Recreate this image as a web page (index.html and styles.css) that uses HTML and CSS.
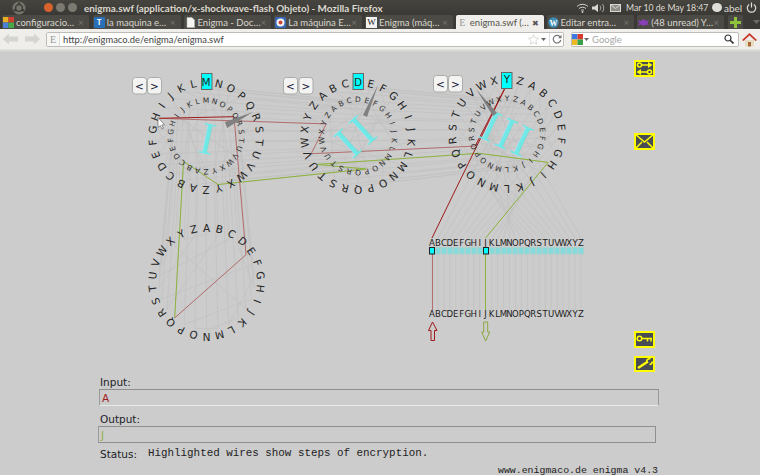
FILE: index.html
```html
<!DOCTYPE html>
<html lang="en">
<head>
<meta charset="utf-8">
<title>enigma.swf</title>
<link rel="stylesheet" href="styles.css">
</head>
<body>
<header class="chrome">
  <div class="titlebar">
    <svg class="ubuntu" width="16" height="14" viewBox="0 0 16 14"><circle cx="8" cy="7" r="6.5" fill="#77746c"/><circle cx="8" cy="7" r="3.4" fill="none" stroke="#3c3b37" stroke-width="1.4"/><circle cx="8" cy="2.6" r="1.3" fill="#3c3b37"/><circle cx="4" cy="9.2" r="1.3" fill="#3c3b37"/><circle cx="12" cy="9.2" r="1.3" fill="#3c3b37"/></svg>
    <span class="winbtn winbtn-close"></span>
    <span class="winbtn"></span>
    <span class="winbtn"></span>
    <span class="title">enigma.swf (application/x-shockwave-flash Objeto) - Mozilla Firefox</span>
    <div class="tray">
      <svg width="13" height="10" viewBox="0 0 13 10"><path d="M1 3.5C4 .6 9 .6 12 3.5M3 5.5C5 3.8 8 3.8 10 5.5M5 7.4C5.8 6.8 7.2 6.8 8 7.4" fill="none" stroke="#d8d6cf" stroke-width="1"/><circle cx="6.5" cy="9" r=".9" fill="#d8d6cf"/></svg>
      <svg class="tray-sound" width="13" height="10" viewBox="0 0 13 10"><path d="M0 3.5h2.5L6 1v8L2.5 6.5H0z" fill="#d8d6cf"/><path d="M8 2.5c1 1.5 1 3.5 0 5M10.5 1c1.6 2.5 1.6 5.5 0 8" fill="none" stroke="#a8a69f"/></svg>
      <svg class="tray-mail" width="11" height="8" viewBox="0 0 11 8"><rect x=".5" y=".5" width="10" height="7" fill="#8f8d86" stroke="#d8d6cf"/><path d="M.5.5l5 4 5-4" fill="none" stroke="#d8d6cf"/></svg>
      <span class="clock">Mar 10 de May 18:47</span>
      <span class="userdot"></span>
      <span class="user">abel</span>
      <svg class="tray-power" width="11" height="11" viewBox="0 0 11 11"><path d="M3.2 2.5a4.2 4.2 0 1 0 4.6 0" fill="none" stroke="#e4e2db" stroke-width="1.2"/><path d="M5.5 .5v5" stroke="#e4e2db" stroke-width="1.2"/></svg>
    </div>
  </div>
  <nav class="tabbar">
    <div class="tab tab-first"><svg class="fav" width="11" height="11" viewBox="0 0 11 11"><rect width="5.5" height="5.5" fill="#e8b020"/><rect x="5.5" width="5.5" height="5.5" fill="#d04030"/><rect y="5.5" width="5.5" height="5.5" fill="#4a80d8"/><rect x="5.5" y="5.5" width="5.5" height="5.5" fill="#48a848"/></svg><span class="tablabel">configuracio…</span><span class="tabx">×</span></div>
    <div class="tab"><span class="fav fav-t">T</span><span class="tablabel">la maquina e…</span><span class="tabx">×</span></div>
    <div class="tab"><svg class="fav" width="11" height="11" viewBox="0 0 11 11"><path d="M2 .5h5l2.5 2.5v7.5H2z" fill="#f4f4f2" stroke="#b8b8b4" stroke-width=".6"/></svg><span class="tablabel">Enigma - Doc…</span><span class="tabx">×</span></div>
    <div class="tab"><svg class="fav" width="11" height="11" viewBox="0 0 11 11"><rect width="11" height="11" rx="1.5" fill="#3a68b8"/><circle cx="5.5" cy="5.5" r="4" fill="#f4f4f4"/><circle cx="5.5" cy="5.5" r="2" fill="#c84838"/></svg><span class="tablabel">La máquina E…</span><span class="tabx">×</span></div>
    <div class="tab"><span class="fav fav-w">W</span><span class="tablabel">Enigma (máq…</span><span class="tabx">×</span></div>
    <div class="tab tab-active"><span class="fav fav-e">E</span><span class="tablabel">enigma.swf (…</span><span class="tabx tabx-active">✖</span></div>
    <div class="tab"><svg class="fav" width="11" height="11" viewBox="0 0 11 11"><circle cx="5.5" cy="5.5" r="5.2" fill="#3f8cb4"/><text class="fav-wp" x="5.5" y="8.5">W</text></svg><span class="tablabel">Editar entra…</span><span class="tabx">×</span></div>
    <div class="tab tab-narrow"><svg class="fav" width="11" height="11" viewBox="0 0 11 11"><path d="M0 3l3 1 2.5-2 2.5 2 3-1-1.5 3 1.5 2.5-3-1-2.5 1.5-2.5-1.5-3 1L1.5 6z" fill="#8a3fb8"/></svg><span class="tablabel">(48 unread) Y…</span><span class="tabx">×</span></div>
    <div class="newtab"><svg width="11" height="11" viewBox="0 0 11 11"><path d="M4 0h3v4h4v3H7v4H4V7H0V4h4z" fill="#8fc23c"/></svg></div>
    <svg class="tabmenu" width="7" height="4" viewBox="0 0 7 4"><path d="M0 0h7L3.5 4z" fill="#6c6a64"/></svg>
  </nav>
  <div class="toolbar">
    <svg class="navarrow" width="15" height="12" viewBox="0 0 15 12"><path d="M0 6l6-5.5V3.5h9v5H6v3z" fill="#d4d4d0"/></svg>
    <svg class="navarrow navarrow-fwd" width="15" height="12" viewBox="0 0 15 12"><path d="M15 6L9 .5V3.5H0v5h9v3z" fill="#d4d4d0"/></svg>
    <div class="urlbar">
      <span class="urlicon">E</span>
      <span class="urltext">http://enigmaco.de/enigma/enigma.swf</span>
      <svg class="star" width="11" height="11" viewBox="0 0 11 11"><path d="M5.5.6l1.5 3.3 3.5.4-2.6 2.4.7 3.5-3.1-1.8-3.1 1.8.7-3.5L.5 4.3 4 3.9z" fill="#fff" stroke="#d0d0cc" stroke-width=".8"/></svg>
      <svg class="drop" width="5" height="3" viewBox="0 0 5 3"><path d="M0 0h5L2.5 3z" fill="#666"/></svg>
      <span class="urlsep"></span>
      <svg class="reload" width="10" height="10" viewBox="0 0 10 10"><path d="M8.5 3.5A3.8 3.8 0 1 0 8.8 6" fill="none" stroke="#777" stroke-width="1.2"/><path d="M9.5.8v3.5H6z" fill="#777"/></svg>
    </div>
    <div class="searchbar">
      <svg width="11" height="11" viewBox="0 0 11 11"><rect width="5.5" height="5.5" fill="#3b78e0"/><rect x="5.5" width="5.5" height="5.5" fill="#d83a2e"/><rect y="5.5" width="5.5" height="5.5" fill="#f0b820"/><rect x="5.5" y="5.5" width="5.5" height="5.5" fill="#38a048"/></svg>
      <svg class="drop drop-search" width="5" height="3" viewBox="0 0 5 3"><path d="M0 0h5L2.5 3z" fill="#666"/></svg>
      <span class="searchtext">Google</span>
      <svg class="magnifier" width="10" height="10" viewBox="0 0 10 10"><circle cx="4" cy="4" r="3" fill="#fff" stroke="#333" stroke-width="1.2"/><path d="M6.2 6.2L9.5 9.5" stroke="#333" stroke-width="1.6"/></svg>
    </div>
    <svg class="home" width="15" height="15" viewBox="0 0 15 15"><path d="M3 8h9v6.5H3z" fill="#e8dcc0"/><path d="M6 10h3v4.5H6z" fill="#a86838"/><path d="M0 8l7.5-7L15 8l-1.5 1-6-5.5L1.5 9z" fill="#c83a28"/></svg>
  </div>
  <div class="toolbar-shade"></div>
</header>

<main class="flash">
  <svg id="machine" class="machine" width="760" height="324" viewBox="0 52 760 324">
    <g id="wires"></g>
    <g id="letters"></g>
    <g class="sideicon">
      <rect x="635" y="61" width="19" height="15"/>
      <circle class="ic-line" cx="639.5" cy="65" r="2"/><path class="ic-line" d="M642 65h7"/><path class="ic-fill" d="M648 62l4.5 3-4.5 3z"/>
      <circle class="ic-line" cx="649.5" cy="72" r="2"/><path class="ic-line" d="M640 72h7"/><path class="ic-fill" d="M641 69l-4.5 3 4.5 3z"/>
    </g>
    <g class="sideicon">
      <rect x="635" y="134" width="19" height="15"/>
      <path class="ic-line" d="M635 134l9.5 8 9.5-8M635 149l7-7M654 149l-7-7"/>
    </g>
    <g class="sideicon">
      <rect x="635" y="332" width="19" height="15"/>
      <circle class="ic-line" cx="639.5" cy="338.5" r="2.3"/><path class="ic-line" d="M642 338.5h10M647.5 338.5v3M651 338.5v3"/>
    </g>
    <g class="sideicon">
      <rect x="635" y="357" width="19" height="14"/>
      <path class="ic-wrench" d="M638 368l10-6.5"/><path class="ic-line" d="M646.5 361c.5-1.5 2-2.5 4-2.2M649.5 364.5c1.5 0 2.5-1 3-3"/>
    </g>
  </svg>

  <form class="console">
    <label class="fieldlabel">Input:</label>
    <div class="field field-input"><span class="value-in">A</span></div>
    <label class="fieldlabel fieldlabel-out">Output:</label>
    <div class="field field-output"><span class="value-out">J</span></div>
    <div class="statusrow"><span class="fieldlabel status-label">Status:</span><span class="status-text">Highlighted wires show steps of encryption.</span></div>
    <div class="credit">www.enigmaco.de enigma v4.3</div>
  </form>
</main>
<script src="script.js"></script>
</body>
</html>
```
FILE: styles.css
```css
* { box-sizing: border-box; }
html, body { margin: 0; padding: 0; }
body { width: 760px; height: 475px; overflow: hidden; background: #cccccc; font-family: "DejaVu Sans", sans-serif; }

.chrome { display: flex; flex-direction: column; font-family: Lato, sans-serif; }
.titlebar { height: 15px; background: linear-gradient(#45443f, #3a3935); display: flex; align-items: center; color: #dfdbd2; position: relative; }
.ubuntu { margin-left: 11px; }
.winbtn { width: 9px; height: 9px; border-radius: 50%; background: #7b7970; margin-left: 3px; }
.winbtn-close { background: #d8622e; margin-left: 17px; }
.winbtn + .winbtn { margin-left: 3px; }
.title { font-size: 9.9px; font-weight: 700; margin-left: 7px; white-space: nowrap; color: #dcd8cf; }
.tray { margin-left: auto; display: flex; align-items: center; font-size: 8.7px; color: #dfdbd2; padding-right: 3px; }
.tray-sound { margin-left: 3px; }
.tray-mail { margin-left: 5px; }
.clock { margin-left: 5px; width: 80px; white-space: nowrap; }
.userdot { width: 10px; height: 9px; border-radius: 50%; background: #e0ded8; margin-left: 6px; }
.user { margin-left: 2px; width: 18px; font-size: 10px; }
.tray-power { margin-left: 4px; }

.tabbar { height: 14px; background: #3b3a36; display: flex; align-items: stretch; padding-left: 2px; gap: 3px; }
.tab { width: 88px; background: #4b4a45; border-radius: 2px 2px 0 0; display: flex; align-items: center; color: #d9d6cd; font-size: 9.5px; padding: 0 5px 0 1px; white-space: nowrap; }
.tab-first { width: 87px; margin-right: 1px; }
.tab-narrow { width: 87px; }
.tab-active { background: #efeeea; color: #55544f; height: 15px; }
.tablabel { margin-left: 2px; flex: 1; }
.tabx { color: #77756e; font-size: 10px; line-height: 1; }
.tabx-active { color: #555; font-size: 8px; }
.fav { width: 11px; height: 11px; flex: none; display: block; }
.fav-t { background: #2a70b8; color: #fff; font-size: 8px; font-weight: 700; text-align: center; line-height: 11px; border-radius: 1px; }
.fav-w { background: #f2f2f2; color: #222; font-family: "Liberation Serif", serif; font-size: 9px; text-align: center; line-height: 11px; }
.fav-e { color: #999; font-family: "Liberation Serif", serif; font-size: 10px; text-align: center; line-height: 11px; }
.fav-wp { fill: #fff; font-family: "Liberation Serif", serif; font-size: 8px; font-weight: 700; text-anchor: middle; }
.newtab { width: 15px; margin-left: 1px; background: #4b4a45; display: flex; align-items: center; justify-content: center; border-radius: 2px 2px 0 0; }
.tabmenu { align-self: center; margin-left: 7px; }

.toolbar { height: 20px; background: #efeeeb; display: flex; align-items: center; padding-left: 3px; }
.navarrow { margin-right: 7px; }
.navarrow-fwd { margin-right: 6px; }
.urlbar { width: 518px; height: 15px; background: #fff; border: 1px solid #bdbcb6; border-radius: 2px; display: flex; align-items: center; }
.urlicon { width: 13px; height: 13px; border-right: 1px solid #ddd; background: #f6f6f4; color: #999; font-family: "Liberation Serif", serif; font-size: 10px; line-height: 13px; text-align: center; flex: none; }
.urltext { font-size: 9.4px; color: #444; margin-left: 3px; flex: 1; white-space: nowrap; }
.star { margin-right: 2px; }
.drop { margin-right: 3px; }
.urlsep { width: 1px; height: 13px; background: #dedede; margin-right: 2px; }
.reload { margin-right: 1px; }
.searchbar { width: 168px; height: 15px; margin-left: 7px; background: #fff; border: 1px solid #bdbcb6; border-radius: 2px; display: flex; align-items: center; padding: 0 3px 0 0; }
.drop-search { margin-left: 1px; }
.searchtext { font-size: 9.5px; color: #a8a8a8; flex: 1; }
.magnifier { margin-right: 1px; }
.home { margin-left: 3px; }
.toolbar-shade { height: 3px; background: linear-gradient(#e6e5e1, #cccccc); }

.flash { display: flex; flex-direction: column; }
.machine { display: block; flex: none; }

.letter { font-family: "DejaVu Sans", sans-serif; fill: #262626; text-anchor: middle; }
.letter-outer { font-size: 10.5px; }
.letter-inner { font-size: 7.5px; fill: #333; }
.row-letter { font-family: "DejaVu Sans Condensed", "DejaVu Sans", sans-serif; font-stretch: condensed; font-size: 9.5px; fill: #222; text-anchor: middle; }
.numeral { font-family: "Liberation Serif", serif; font-size: 46px; fill: #70e8e8; text-anchor: middle; }
.numeral-2 { letter-spacing: 5px; }
.numeral-3 { letter-spacing: 2px; }
.stepper { fill: #f3f4f2; stroke: #a9aca8; stroke-width: 1; }
.stepper-text { font-family: "DejaVu Sans", sans-serif; font-size: 10.5px; fill: #113; text-anchor: middle; }
.window { fill: #00ffff; stroke: #666; stroke-width: 1; }
.needle { fill: #808080; }
.wire { stroke: #c0c0c0; stroke-width: .6; fill: none; }
.hot-red { stroke: #b36d6d; stroke-width: 1; fill: none; }
.hot-red-strong { stroke: #a01c1c; stroke-width: 1; fill: none; }
.hot-green { stroke: #8db33c; stroke-width: 1; fill: none; }
.lamp { fill: #86dada; stroke: #a8d0d0; stroke-width: .6; }
.lamp-on { fill: #00ffff; stroke: #222; stroke-width: 1; }
.arrow-red { fill: none; stroke: #a01818; stroke-width: 1; }
.arrow-green { fill: none; stroke: #8aa83a; stroke-width: 1; }
.cursor { fill: #fff; stroke: #555; stroke-width: .6; }
.sideicon rect { fill: #474c55; stroke: #ffff00; stroke-width: 2; }
.ic-line { fill: none; stroke: #ffff00; stroke-width: 1.5; }
.ic-fill { fill: #ffff00; }
.ic-wrench { fill: none; stroke: #ffff00; stroke-width: 2.4; }

.console { display: flex; flex-direction: column; padding-left: 98px; font-family: "DejaVu Sans", sans-serif; }
.fieldlabel { font-size: 10.5px; line-height: 13px; color: #1c2228; padding-left: 2px; height: 13px; }
.fieldlabel-out { margin-top: 7px; }
.field { height: 17px; border-top: 1px solid #8f8f8f; border-left: 1px solid #9a9a9a; font-family: "DejaVu Sans", sans-serif; font-size: 10.5px; line-height: 17px; padding-left: 2px; }
.field-input { width: 560px; margin-left: 1px; border-right: 1px solid #9a9a9a; border-bottom: 1px solid #e6ebe6; }
.field-output { width: 558px; border-right: 1px solid #8f8f8f; border-bottom: 1px solid #8f8f8f; }
.value-in { color: #a01c1c; }
.value-out { color: #8db33c; }
.statusrow { display: flex; margin-top: 4px; height: 17px; }
.status-label { margin-top: 1px; width: 50px; }
.status-text { font-family: "Liberation Mono", monospace; font-size: 10.87px; line-height: 11px; margin-top: 1px; color: #222; white-space: nowrap; }
.credit { width: 560px; text-align: right; font-family: "Liberation Mono", monospace; font-size: 9.9px; line-height: 12px; color: #222; margin-top: 1px; }
```
FILE: script.js
```js
var NS = "http://www.w3.org/2000/svg";
var wiresG = document.getElementById("wires");
var lettersG = document.getElementById("letters");
var STEP = 360 / 26;
var ABC = "ABCDEFGHIJKLMNOPQRSTUVWXYZ";
var LAMP_X = 432, LAMP_STEP = 5.96;

function el(parent, name, attrs, text) {
  var n = document.createElementNS(NS, name);
  for (var k in attrs) n.setAttribute(k, attrs[k]);
  if (text !== undefined) n.textContent = text;
  parent.appendChild(n);
  return n;
}
function ix(c) { return ABC.indexOf(c); }
function polar(cx, cy, r, idx) {
  var a = idx * STEP * Math.PI / 180;
  return [cx + r * Math.sin(a), cy - r * Math.cos(a)];
}
function line(p, q, cls) {
  el(wiresG, "line", { x1: p[0].toFixed(1), y1: p[1].toFixed(1), x2: q[0].toFixed(1), y2: q[1].toFixed(1), "class": cls });
}

var rotors = {
  III: { x: 507, y: 134, top: ix("Y"), wiring: "BDFHJLCPRTXVZNYEIWGAKMUSQO", router: 55, rinner: 36 },
  II:  { x: 358, y: 136, top: ix("D"), wiring: "AJDKSIRUXBLHWTMCQGZNPYFVOE", router: 54, rinner: 37 },
  I:   { x: 206, y: 136, top: ix("M"), wiring: "EKMFLGDQVZNTOWYHXUSPAIBRCJ", router: 54, rinner: 36 }
};
var REF = "YRUHQSLDPXNGOKMIEBFZCWVJAT";
var reflector = { x: 206.5, y: 282, r: 54.5, contact: 48 };
var OUT_R = 50, IN_R = 34;

function outer(R, i) { return polar(R.x, R.y, OUT_R, i); }
function inner(R, i) { return polar(R.x, R.y, IN_R, i); }
function refl(i) { return polar(reflector.x, reflector.y, reflector.contact, i); }
function lampTop(i) { return [LAMP_X + i * LAMP_STEP, 238]; }

var order = [rotors.III, rotors.II, rotors.I];

/* faint wiring */
order.forEach(function (R, k) {
  for (var l = 0; l < 26; l++) {
    var o = (l - R.top + 26) % 26;
    var n = (ix(R.wiring[l]) - R.top + 26) % 26;
    line(outer(R, o), inner(R, n), "wire");
  }
  for (var i = 0; i < 26; i++) {
    if (k < 2) line(inner(R, i), outer(order[k + 1], i), "wire");
    else line(inner(R, i), refl(i), "wire");
  }
});
for (var i = 0; i < 26; i++) {
  line(outer(rotors.III, i), lampTop(i), "wire");
  var lx = LAMP_X + i * LAMP_STEP;
  line([lx, 254], [lx, 310], "wire");
  var j = ix(REF[i]);
  if (j > i) line(refl(i), refl(j), "wire");
}

/* highlighted path: A goes in, J comes out */
function trace(start) {
  var idx = start, redSegs = [], greenSegs = [];
  redSegs.push([lampTop(idx), outer(rotors.III, idx), "hot-red-strong"]);
  order.forEach(function (R, k) {
    var n = (ix(R.wiring[(idx + R.top) % 26]) - R.top + 26) % 26;
    redSegs.push([outer(R, idx), inner(R, n), k === 1 ? "hot-red" : "hot-red-strong"]);
    idx = n;
    redSegs.push([inner(R, idx), k < 2 ? outer(order[k + 1], idx) : refl(idx), "hot-red"]);
  });
  var r = ix(REF[idx]);
  redSegs.push([refl(idx), refl(r), "hot-red"]);
  idx = r;
  [rotors.I, rotors.II, rotors.III].forEach(function (R, k) {
    var prev = k === 0 ? refl(idx) : outer([rotors.I, rotors.II][k - 1], idx);
    greenSegs.push([prev, inner(R, idx), "hot-green"]);
    var letter = ABC[(idx + R.top) % 26];
    var o = (R.wiring.indexOf(letter) - R.top + 26) % 26;
    greenSegs.push([inner(R, idx), outer(R, o), "hot-green"]);
    idx = o;
  });
  greenSegs.push([outer(rotors.III, idx), lampTop(idx), "hot-green"]);
  return { red: redSegs, green: greenSegs, out: idx };
}
var path = trace(0);
path.green.concat(path.red).forEach(function (s) { line(s[0], s[1], s[2]); });
line([432.5, 254], [432.5, 310], "hot-red");
line([485.5, 254], [485.5, 310], "hot-green");

/* numerals and needles */
function numeral(t, x, y, rot, cls) {
  el(lettersG, "text", { "class": "numeral " + cls, transform: "translate(" + x + " " + y + ") rotate(" + rot + ")", y: 15 }, t);
}
numeral("I", 207, 139, 12, "");
numeral("II", 357, 135, -42, "numeral-2");
numeral("III", 507, 134, 25, "numeral-3");
[["225,122 253,112 227,128"], ["378,85 367,117 363,115"], ["476,89 497,113 493,116"]].forEach(function (p) {
  el(lettersG, "polygon", { "class": "needle", points: p[0] });
});

/* rotor letters */
function ring(R, r, cls) {
  for (var i = 0; i < 26; i++) {
    var p = polar(R.x, R.y, r, i);
    el(lettersG, "text", {
      "class": "letter " + cls,
      transform: "translate(" + p[0].toFixed(1) + " " + p[1].toFixed(1) + ") rotate(" + (i * STEP).toFixed(1) + ")",
      y: cls === "letter-outer" ? 4 : 3
    }, ABC[(R.top + i) % 26]);
  }
}
function box(x, y, w, h, cls, rx) {
  var a = { x: x, y: y, width: w, height: h, "class": cls };
  if (rx) a.rx = rx;
  return el(lettersG, "rect", a);
}
[[rotors.I, 201.5, 73.5, 132.5, 147.5, 77.5],
 [rotors.II, 353, 73.5, 283.5, 299, 77.5],
 [rotors.III, 501.5, 72.5, 433.5, 448.5, 75.5]].forEach(function (c) {
  box(c[1], c[2], 10.5, 16, "window");
  ring(c[0], c[0].router, "letter-outer");
  ring(c[0], c[0].rinner, "letter-inner");
  box(c[3], c[5], 14, 16.5, "stepper", 3);
  box(c[4], c[5], 14, 16.5, "stepper", 3);
  el(lettersG, "text", { "class": "stepper-text", x: c[3] + 7, y: c[5] + 12 }, "<");
  el(lettersG, "text", { "class": "stepper-text", x: c[4] + 7, y: c[5] + 12 }, ">");
});

/* reflector ring */
for (var i = 0; i < 26; i++) {
  var p = polar(reflector.x, reflector.y, reflector.r, i);
  el(lettersG, "text", {
    "class": "letter letter-outer",
    transform: "translate(" + p[0].toFixed(1) + " " + p[1].toFixed(1) + ") rotate(" + (i * STEP).toFixed(1) + ")",
    y: 4
  }, ABC[i]);
}

/* lamp board */
for (var i = 0; i < 26; i++) {
  var x = LAMP_X + i * LAMP_STEP;
  el(lettersG, "text", { "class": "row-letter", x: x.toFixed(1), y: 246 }, ABC[i]);
  el(lettersG, "text", { "class": "row-letter", x: x.toFixed(1), y: 316.5 }, ABC[i]);
  box(Math.round(x) - 2.5, 247.5, 5, 6.5, "lamp " + (i === 0 || i === path.out ? "lamp-on" : ""));
}
el(lettersG, "path", { "class": "arrow-red", d: "M432.5 322l-4 8.5h2.5v10h3.5v-10h2.5z" });
el(lettersG, "path", { "class": "arrow-green", d: "M485.7 341l-4-9h2v-10h4v10h2z" });
el(lettersG, "path", { "class": "cursor", d: "M158 117.5v10l2.3-2 1.7 3.5 1.4-.8-1.6-3.2 2.8-.2z" });
```
